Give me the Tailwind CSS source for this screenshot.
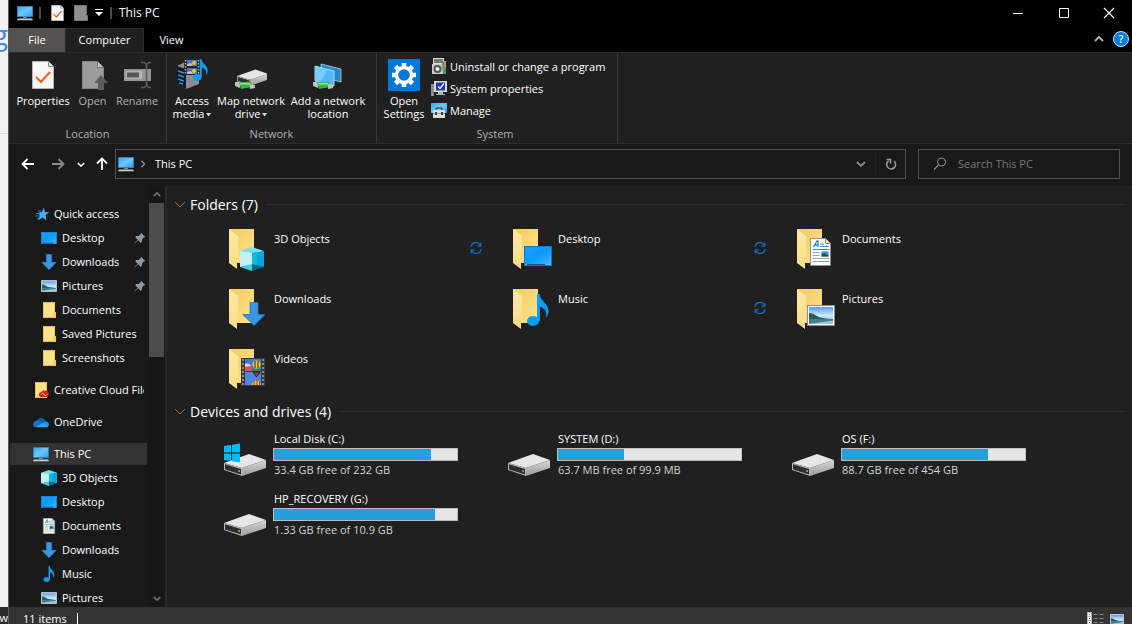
<!DOCTYPE html>
<html lang="en">

<head>
    <meta charset="UTF-8">
    <meta name="viewport" content="width=device-width, initial-scale=1.0">
    <title>This PC</title>
    <script src="https://cdn.jsdelivr.net/npm/@tailwindcss/browser@4"></script>
</head>

<body class="flex h-screen overflow-hidden bg-black font-['Open_Sans','Noto_Sans',sans-serif] text-[11px] text-white">

    <!-- Icon sprite -->
    <svg class="absolute h-0 w-0" aria-hidden="true">
        <defs>
            <linearGradient id="screen" x1="0" y1="0" x2="1" y2="1">
                <stop offset="0" stop-color="#35a9f5" /><stop offset=".5" stop-color="#6cc7ff" /><stop offset="1" stop-color="#2f9df0" />
            </linearGradient>
            <linearGradient id="desk" x1="0" y1="0" x2="1" y2="1">
                <stop offset="0" stop-color="#1f9ffb" /><stop offset=".5" stop-color="#0a9aff" /><stop offset="1" stop-color="#45b4ff" />
            </linearGradient>
            <linearGradient id="back" x1="0" y1="0" x2="1" y2="1">
                <stop offset="0" stop-color="#f3cd62" /><stop offset="1" stop-color="#ffe28d" />
            </linearGradient>
            <linearGradient id="flap" x1="0" y1="0" x2="0" y2="1">
                <stop offset="0" stop-color="#ffe9a6" /><stop offset="1" stop-color="#fbdc86" />
            </linearGradient>
            <linearGradient id="side" x1="0" y1="0" x2="0" y2="1">
                <stop offset="0" stop-color="#d5d5d5" /><stop offset="1" stop-color="#9c9c9c" />
            </linearGradient>
            <linearGradient id="sky" x1="0" y1="0" x2="0" y2="1">
                <stop offset="0" stop-color="#5b9cf0" /><stop offset=".5" stop-color="#cfe6fa" /><stop offset="1" stop-color="#7fb4dc" />
            </linearGradient>
        </defs>

        <symbol id="pc" viewBox="0 0 16 16">
            <path d="M0 1h16v11H0z" fill="#2a6f9e" />
            <path d="M.7 1.7h14.6v9.6H.7z" fill="url(#screen)" />
            <path d="M6 12h4v1H6z" fill="#7e8a94" />
            <path d="M1 13.5h14l1 1.800H0z" fill="#c4d2de" />
        </symbol>
        <symbol id="star" viewBox="0 0 16 16">
            <path d="M10 1.500l.8 4.500 4.500.3-3.800 2.600.9 5.300-3.900-2.700-4.500 3 1.700-5-1.500-2.900 3.400-.3z" fill="#3db2f7" />
            <path d="M4 5h3M2 7.500h4M1 10h4M3 13l3-2" stroke="#1d7fc2" />
        </symbol>
        <symbol id="desktop" viewBox="0 0 28 20" preserveAspectRatio="none">
            <path d="M0 0h28v20H0z" fill="#0876c9" />
            <path d="M1 1h26v17H1z" fill="url(#desk)" />
            <path d="M1 18h26v1H1z" fill="#05579a" />
            <path d="M1.500 18h1v1h-1zM21.500 18h1v1h-1zM23.500 18h1v1h-1zM25.500 18h1v1h-1z" fill="#fff" />
        </symbol>
        <symbol id="arrow" viewBox="0 0 24 24">
            <path d="M8 .5h8v12h7L12 23.500.8 12.500H8z" fill="#3b97e6" stroke="#1f78c4" stroke-width=".8" />
        </symbol>
        <symbol id="picture" viewBox="0 0 28 21" preserveAspectRatio="none">
            <path d="M0 0h28v21H0z" fill="#8c8c8c" />
            <path d="M1 1h26v19H1z" fill="#fff" />
            <path d="M2 2h24v17H2z" fill="url(#sky)" />
            <path d="M2 8c3 0 5 1 8 3s8 2 13 3l3 1H2z" fill="#2d5a55" />
            <path d="M2 14h24v1.500L2 19z" fill="#3f7f8c" />
            <path d="M2 19l24-3v3z" fill="#9cc6d8" />
        </symbol>
        <symbol id="folder" viewBox="0 0 16 16">
            <path d="M2 0h12v16H2z" fill="#e9c04f" />
            <path d="M3 1h10v14H3z" fill="#ffe18a" />
            <path d="M12.500 10H15v6h-2.500z" fill="#f0c95a" />
        </symbol>
        <symbol id="creative" viewBox="0 0 16 16">
            <path d="M2 0h12v16H2z" fill="#e9c04f" />
            <path d="M3 1h10v14H3z" fill="#ffe18a" />
            <path d="M11 8.500c3 0 4.800 1.200 4.800 3.400 0 2-1.300 3.100-3.300 3.100H8.800C7 15 6 14 6 12.400c0-1.700 1.200-2.500 2.600-2.500.5-.9 1.300-1.400 2.400-1.400z" fill="#e21b14" />
            <path d="M8 12.500c1-2 2.200-1.200 3 0s2 1.800 3.200-.2M9.500 11l3 3" stroke="#ffd9a0" stroke-width=".8" fill="none" />
        </symbol>
        <symbol id="onedrive" viewBox="0 0 16 16">
            <path d="M4 6.500a4.500 4.500 0 0 1 8.500 1L9 10 4 8z" fill="#0a5cad" />
            <path d="M.2 10.500C0 8.500 1.500 7 3.500 6.500c2.500-.2 4 1.700 6 2.700L2 13.200C1 12.800.3 11.800.2 10.500z" fill="#1277d4" />
            <path d="M10 9c1-1.200 2-1.600 3-1.500 1.700.2 3 1.500 3 3.200l-1 1.500z" fill="#1990e8" />
            <path d="M2 13.200L10 8.800l5.600 3.200c-.5 1-1.300 1.300-2.400 1.300H3z" fill="#2aa9ef" />
        </symbol>
        <symbol id="cube" viewBox="0 0 24 24">
            <path d="M12 0l12 4-12 4L0 4z" fill="#74dff0" />
            <path d="M0 4l12 2v12L0 20z" fill="#c3f1f4" />
            <path d="M24 4L12 6v12l12 2z" fill="#0aa5de" />
            <path d="M12 6l5-1v14l-5-1z" fill="#10bcd0" />
            <path d="M0 20l12-3v7z" fill="#3dd0de" />
            <path d="M24 20l-12-3v7z" fill="#096d86" />
        </symbol>
        <symbol id="document" viewBox="0 0 21 28">
            <path d="M.5.500h15l5 5v22H.5z" fill="#fff" stroke="#8f8f8f" />
            <path d="M15.500.500v5h5" fill="#e3e3e3" stroke="#8f8f8f" />
            <path d="M3.500 9L7 3h1v6M4.500 7H8" stroke="#2187d0" stroke-width="1.300" fill="none" />
            <path d="M10 6h4M10 8.500h9M2.500 11.500h17" stroke="#2f8fd4" />
            <path d="M2.500 14.500h7M2.500 17.500h7M2.500 20.500h17M2.500 23.500h17" stroke="#a0a0a0" />
            <path d="M11.500 13.500h7v5h-7z" fill="#4a86b8" />
            <path d="M11.500 16.500l3-1 4 2v1h-7z" fill="#214e52" />
        </symbol>
        <symbol id="music" viewBox="0 0 22 32">
            <ellipse cx="6" cy="27" rx="6" ry="5" fill="#0a9cf5" />
            <path d="M10 0h2.500c.5 7 9 9 9 17 0 3-1 5.500-2.500 6.500 1-4.500.5-8-6-11V27H10z" fill="#0a9cf5" />
        </symbol>
        <symbol id="video" viewBox="0 0 24 28">
            <path d="M0 0h24v28H0z" fill="#3a3a3a" />
            <path d="M2 1v27M22 1v27" stroke="#a5a5a5" stroke-width="1.500" stroke-dasharray="2 2" />
            <path d="M4 1h16v12H4z" fill="#4178d6" />
            <path d="M4 14h16v13H4z" fill="#4c86e8" />
            <path d="M4 8c3-3 5 1 7 2v3H4z" fill="#dd4f5b" />
            <path d="M4 6c3-1 5 0 6 2l-6 1z" fill="#f3c6d0" />
            <path d="M11 11h9v2h-9z" fill="#218a45" />
            <circle cx="15.500" cy="6.500" r="4" fill="#f4c81f" />
            <path d="M14 3v7M17 3v7M12 14l3.500 5 3.500-5z" stroke="#222" fill="#c3282b" />
            <path d="M11 27c0-6 9-6 9 0z" fill="#f4c81f" />
            <path d="M13 27v-4M16 27v-5M18.500 27v-3" stroke="#b3322b" />
        </symbol>
        <symbol id="pin" viewBox="0 0 12 12">
            <path d="M7 .8L11.200 5l-1.400.4-1.700 1.800-.2 2.600-1.200 1L4 8.200.8 11.500l-.4-.4L3.700 7.800 1.200 5.300l1-1.200 2.600-.2L6.600 2.200z" fill="#8f9aa3" />
        </symbol>
        <symbol id="bigfolder" viewBox="0 0 40 44">
            <path d="M1 0h25v34H9z" fill="url(#back)" />
            <path d="M1 0l9 7v25H9v8l-8-6z" fill="url(#flap)" />
        </symbol>
        <symbol id="drive" viewBox="0 0 42 22">
            <path d="M0 9L25 0l17 6-24 8z" fill="#e6e6e8" />
            <path d="M18 14l24-8v8l-24 8z" fill="url(#side)" />
            <path d="M0 9l18 5v8L0 16z" fill="#b9b9b9" />
            <path d="M1 10.300l16 4.600v5.700L1 15.500z" fill="#2e2e2e" />
            <path d="M14 16l2 .6v1.600l-2-.6z" fill="#37e03a" />
        </symbol>
        <symbol id="sync" viewBox="0 0 12 12">
            <path d="M1 4.800A4.800 4.800 0 0 1 10 3M11 7.200A4.800 4.800 0 0 1 2 9" stroke="#0f76d4" stroke-width="1.200" fill="none" />
            <path d="M10.800.8v3.400H7.400M1.200 11.200V7.800h3.400" stroke="#0f76d4" stroke-width="1.200" fill="none" />
        </symbol>
        <symbol id="check" viewBox="0 0 22 28">
            <path d="M.5.500h16l5 5v22H.5z" fill="#f6f6f6" stroke="#b5b5b5" />
            <path d="M16.500.500v5h5" fill="#ddd" stroke="#888" />
            <path d="M4 16l5 5 9-10" stroke="#f26522" stroke-width="2.200" fill="none" />
        </symbol>
        <symbol id="chev" viewBox="0 0 10 6">
            <path d="M1 1l4 4 4-4" fill="none" stroke="currentColor" stroke-width="1.800" />
        </symbol>
        <symbol id="thinchev" viewBox="0 0 12 7">
            <path d="M1 1l5 5 5-5" fill="none" stroke="currentColor" />
        </symbol>
        <symbol id="plug" viewBox="0 0 20 8">
            <path d="M0 1l5 0v6l-5-2z" fill="#b9c6b9" />
            <path d="M4 1h12l1 5-11 2z" fill="#35b54a" />
            <path d="M5 2h10v1.500H5z" fill="#8fe69b" />
            <path d="M15 3l5 1v3l-5 1z" fill="#b9c6b9" />
        </symbol>
    </svg>

    <!-- Window behind -->
    <div class="flex w-2 shrink-0 flex-col overflow-hidden bg-[#f1f1f1]" aria-hidden="true">
        <div class="flex h-[134px] justify-end border-b border-[#d8d8d8] pt-3 font-['Open_Sans',sans-serif] text-[28px] leading-[44px] text-[#4285f4]">g</div>
        <div class="flex-1"></div>
        <div class="flex h-[17px] justify-end bg-[#2b2b2b] text-[11px] leading-[22px]">ww</div>
    </div>

    <!-- Explorer window -->
    <div class="flex min-w-0 flex-1 flex-col border-l border-[#5a5a5a]">

        <header class="flex h-7 shrink-0 items-center bg-black pb-0.5 pl-2">
            <svg class="h-4 w-4"><use href="#pc" /></svg>
            <span class="ml-1.5 h-3 w-0.5 bg-[#4a4a4a]"></span>
            <button class="ml-2 flex w-4 justify-center" aria-label="Properties"><svg class="h-4 w-[13px]"><use href="#check" /></svg></button>
            <button class="ml-2 flex w-4 justify-center" aria-label="New folder">
                <svg class="h-4 w-[14px]" viewBox="0 0 14 16"><path d="M.5.500h12v10h1v5H.5z" fill="#8f8f8f" stroke="#777" /></svg>
            </button>
            <button class="ml-0.5 flex w-4 justify-center" aria-label="Customize">
                <svg class="h-2 w-2" viewBox="0 0 8 8"><path d="M0 0h8v1H0zM0 3h8L4 7z" fill="#fff" /></svg>
            </button>
            <span class="ml-[3px] h-3 w-0.5 bg-[#4a4a4a]"></span>
            <h1 class="ml-[7px] flex-1 text-[12px]">This PC</h1>
            <button class="flex w-[46px] justify-center" aria-label="Minimize"><svg class="h-3 w-3" viewBox="0 0 12 12"><path d="M1 6.500h10" stroke="#fff" /></svg></button>
            <button class="flex w-[45px] justify-center" aria-label="Maximize"><svg class="h-3 w-3" viewBox="0 0 12 12"><path d="M1.500 1.500h9v9h-9z" fill="none" stroke="#fff" /></svg></button>
            <button class="flex w-[46px] justify-center" aria-label="Close"><svg class="h-3 w-3" viewBox="0 0 12 12"><path d="M1 1l10 10M11 1L1 11" stroke="#fff" stroke-width="1.200" /></svg></button>
        </header>

        <nav class="flex h-6 shrink-0 items-stretch bg-black" aria-label="Ribbon tabs">
            <button class="w-14 bg-[#545250]">File</button>
            <button class="-mb-px w-[79px] border-x border-t border-[#2b2b2b] bg-[#202020] pb-0.5">Computer</button>
            <button class="w-[55px]">View</button>
            <div class="flex flex-1 items-center justify-end gap-[9px] pb-0.5 pr-[3px]">
                <button class="text-[#b5b5b5]" aria-label="Collapse ribbon"><svg class="h-1.5 w-2.5 rotate-180"><use href="#chev" /></svg></button>
                <button class="flex h-4 w-4 items-center justify-center rounded-full border border-[#c9e3f8] bg-[#0a7be0] text-[10px] font-semibold" aria-label="Help">?</button>
            </div>
        </nav>

        <!-- Ribbon -->
        <div class="flex h-[92px] shrink-0 border-y border-[#2b2b2b] bg-[#202020] leading-[13px]">
            <section class="flex w-[158px] flex-col border-r border-[#383838]">
                <div class="flex flex-1 items-start pl-[7px] pt-1.5">
                    <button class="flex w-[54px] flex-col items-center gap-[3px]">
                        <svg class="h-8 w-8" viewBox="0 0 32 32"><use href="#check" x="5" y="2" width="22" height="28" /></svg>
                        Properties
                    </button>
                    <button class="flex w-[45px] flex-col items-center gap-[3px] text-[#b0b0b0]">
                        <svg class="h-8 w-8" viewBox="0 0 32 32">
                            <path d="M5.500 2.500h15l6 6v21h-21z" fill="#9b9b9b" stroke="#858585" />
                            <path d="M20.500 2.500v6h6" fill="#c4c4c4" stroke="#777" />
                            <path d="M24 16l7 8h-4v7h-6v-7h-4z" fill="#5d5d5d" />
                        </svg>
                        Open
                    </button>
                    <button class="flex w-[44px] flex-col items-center gap-[3px] text-[#b0b0b0]">
                        <svg class="h-8 w-8" viewBox="0 0 32 32">
                            <path d="M3 10h27v12H3z" fill="#979797" />
                            <path d="M5 12h16v8H5z" fill="#b5b5b5" />
                            <path d="M6 13.500h12v5H6z" fill="#565656" />
                            <path d="M20 3.500h3l2.500 2v21l-2.500 2h-3M30 3.500h-2l-2.500 2M30 28.500h-2l-2.500-2" stroke="#5d5d5d" stroke-width="1.600" fill="none" />
                        </svg>
                        Rename
                    </button>
                </div>
                <h2 class="pb-[3px] text-center text-[#b0b0b0]">Location</h2>
            </section>

            <section class="flex w-[210px] flex-col border-r border-[#383838]">
                <div class="flex flex-1 items-start pl-px pt-1.5">
                    <button class="flex w-[48px] flex-col items-center gap-[3px]">
                        <svg class="h-8 w-8" viewBox="0 0 32 32">
                            <path d="M1 7l8-4 14 5v17l-13 5-9-4z" fill="#8b8e92" />
                            <path d="M1 7l9 3v20l-9-4z" fill="#15181c" />
                            <path d="M2 12l6 2M2 16l6 2M2 20l6 2M3 24l4 1" stroke="#1d9bf0" stroke-width="1.400" />
                            <path d="M8 0h16v16H8z" fill="#222" />
                            <path d="M9.500 1v15M22.500 1v15" stroke="#b5b5b5" stroke-width="1.500" stroke-dasharray="1.500 1.500" />
                            <path d="M11 1h10v6H11zM11 9h10v6H11z" fill="#4178d6" />
                            <path d="M11 5l4-1 2 3h-6zM11 13l4-1 2 3h-6z" fill="#e8b0b8" />
                            <circle cx="18" cy="4" r="2" fill="#f4c81f" /><circle cx="18" cy="12" r="2" fill="#f4c81f" />
                            <use href="#music" x="17" y="0" width="15" height="22" />
                        </svg>
                        <span>Access<br>media<svg class="ml-0.5 inline h-1 w-[5px]" viewBox="0 0 5 4"><path d="M0 0h5L2.500 3.500z" fill="#ddd" /></svg></span>
                    </button>
                    <button class="flex w-[70px] flex-col items-center gap-[3px] whitespace-nowrap">
                        <svg class="h-8 w-8" viewBox="0 0 32 32">
                            <use href="#drive" x="2" y="10" width="31" height="17" />
                            <use href="#plug" x="0" y="22" width="20" height="8" />
                        </svg>
                        <span>Map network<br>drive<svg class="ml-0.5 inline h-1 w-[5px]" viewBox="0 0 5 4"><path d="M0 0h5L2.500 3.500z" fill="#ddd" /></svg></span>
                    </button>
                    <button class="flex w-[84px] flex-col items-center gap-[3px] whitespace-nowrap">
                        <svg class="h-8 w-8" viewBox="0 0 32 32">
                            <path d="M9 5l20 5v13L9 18z" fill="#2b87c4" stroke="#9ed7f7" stroke-width=".8" />
                            <path d="M3 7l19 5v15L3 22z" fill="#55b6f5" stroke="#b9e3fa" stroke-width=".9" />
                            <path d="M3 7l13 3.500L8 23l-5-1z" fill="#7acbfb" />
                            <use href="#plug" x="1" y="22" width="20" height="8" />
                        </svg>
                        <span>Add a network<br>location</span>
                    </button>
                </div>
                <h2 class="pb-[3px] text-center text-[#b0b0b0]">Network</h2>
            </section>

            <section class="flex w-[241px] flex-col border-r border-[#383838]">
                <div class="flex flex-1 items-start pl-[3px]">
                    <button class="mt-1.5 flex w-[48px] flex-col items-center gap-[3px]">
                        <svg class="h-8 w-8" viewBox="0 0 32 32">
                            <path d="M0 0h32v32H0z" fill="#0078d7" />
                            <g stroke="#fff" stroke-width="4.600">
                                <path d="M16 4v24M4 16h24M7.500 7.500l17 17M24.500 7.500l-17 17" />
                            </g>
                            <circle cx="16" cy="16" r="7.500" fill="#0078d7" stroke="#fff" stroke-width="3.400" />
                        </svg>
                        <span>Open<br>Settings</span>
                    </button>
                    <div class="ml-[3px] flex flex-col pt-[3px]">
                        <button class="flex h-[22px] items-center gap-[3px] pb-0.5">
                            <svg class="h-4 w-4" viewBox="0 0 16 16">
                                <path d="M2 0h11v7H2z" fill="#d8d8d8" /><path d="M3 1h9v4H3z" fill="#777" />
                                <path d="M1 6h11v10H1z" fill="#c9c9c9" /><path d="M11 4l4-1v13h-3z" fill="#4c9a5c" /><path d="M13 3h2v6h-2z" fill="#e08a4a" />
                                <circle cx="6.500" cy="11" r="4" fill="#555" /><circle cx="6.500" cy="11" r="2" fill="#eee" />
                            </svg>
                            Uninstall or change a program
                        </button>
                        <button class="flex h-[22px] items-center gap-[3px] pb-0.5">
                            <svg class="h-4 w-4" viewBox="0 0 16 16">
                                <path d="M0 4h3v12H0z" fill="#8d8d8d" /><path d="M3 1h13v11H3z" fill="#d9d9d9" /><path d="M5 2.500h9v8H5z" fill="#1c39b8" />
                                <path d="M7 6.500l2 2 4-5" stroke="#fff" stroke-width="1.300" fill="none" /><path d="M7 12h5v2h2v1H5v-1h2z" fill="#b5b5b5" />
                            </svg>
                            System properties
                        </button>
                        <button class="flex h-[22px] items-center gap-[3px] pb-0.5">
                            <svg class="h-4 w-4" viewBox="0 0 16 16">
                                <path d="M0 1h16v10H0z" fill="url(#screen)" /><path d="M5 8V6h6v2" fill="none" stroke="#333" />
                                <path d="M2 8h12v8H2z" fill="#dcdcdc" /><path d="M2 11h12v1H2z" fill="#999" /><path d="M4 10h2v3H4zM10 10h2v3h-2z" fill="#444" />
                            </svg>
                            Manage
                        </button>
                    </div>
                </div>
                <h2 class="pb-[3px] pr-1 text-center text-[#b0b0b0]">System</h2>
            </section>
        </div>

        <!-- Address bar -->
        <div class="flex h-[42px] shrink-0 items-center bg-[#191919] pb-0.5 pl-3 pr-3">
            <button aria-label="Back"><svg class="h-3.5 w-3.5" viewBox="0 0 14 14"><path d="M13 7H2M6.500 2L1.500 7l5 5" fill="none" stroke="#fff" stroke-width="1.800" /></svg></button>
            <button class="ml-4" aria-label="Forward"><svg class="h-3.5 w-3.5" viewBox="0 0 14 14"><path d="M1 7h11M7.500 2l5 5-5 5" fill="none" stroke="#8a8a8a" stroke-width="1.800" /></svg></button>
            <button class="ml-3" aria-label="Recent locations"><svg class="h-[5px] w-2"><use href="#chev" /></svg></button>
            <button class="ml-2.5" aria-label="Up"><svg class="h-3.5 w-3.5" viewBox="0 0 14 14"><path d="M7 13V2M2 6.500l5-5 5 5" fill="none" stroke="#fff" stroke-width="1.800" /></svg></button>
            <div class="ml-[6px] flex h-[30px] flex-1 items-center border border-[#535353] pl-0.5">
                <svg class="h-4 w-4"><use href="#pc" /></svg>
                <svg class="ml-[5px] h-1.5 w-2 -rotate-90 text-[#8a8a8a]"><use href="#chev" /></svg>
                <span class="ml-2 flex-1">This PC</span>
                <button class="mr-[9px] text-[#8a8a8a]" aria-label="Previous locations"><svg class="h-1.5 w-2.5"><use href="#chev" /></svg></button>
                <button class="flex h-full w-[30px] items-center justify-center border-l border-[#222]" aria-label="Refresh">
                    <svg class="h-3 w-3" viewBox="0 0 12 12"><path d="M3.500 2.800A4.500 4.500 0 1 0 9 3" fill="none" stroke="#9a9a9a" stroke-width="1.500" /><path d="M1.500 1.500h4v4" fill="none" stroke="#9a9a9a" stroke-width="1.500" /></svg>
                </button>
            </div>
            <label class="ml-3 flex h-[30px] w-[202px] items-center border border-[#535353] pl-[14px]">
                <svg class="h-3.5 w-3.5 shrink-0" viewBox="0 0 14 14"><circle cx="8.500" cy="5" r="4" fill="none" stroke="#8a8a8a" /><path d="M5.500 8L1 12.500" stroke="#8a8a8a" stroke-width="1.200" /></svg>
                <input type="search" aria-label="Search" placeholder="Search This PC" class="ml-[11px] w-full min-w-0 bg-transparent outline-none placeholder:text-[#7a7a7a]">
            </label>
        </div>

        <div class="flex min-h-0 flex-1">
            <!-- Navigation pane -->
            <aside class="flex w-[158px] shrink-0 border-r-2 border-[#2b2b2b] bg-[#191919]">
                <nav class="flex w-[139px] flex-col gap-0.5 overflow-hidden whitespace-nowrap pl-px pt-[17px]" aria-label="Folders">
                    <a href="#" class="flex h-[22px] shrink-0 items-center gap-1 pl-6"><svg class="h-4 w-4"><use href="#star" /></svg>Quick access</a>
                    <a href="#" class="flex h-[22px] shrink-0 items-center gap-[5px] pl-[31px]"><svg class="h-3 w-4"><use href="#desktop" /></svg>Desktop<svg class="ml-auto mr-0.5 h-3 w-3"><use href="#pin" /></svg></a>
                    <a href="#" class="flex h-[22px] shrink-0 items-center gap-[5px] pl-[31px]"><svg class="h-4 w-4"><use href="#arrow" /></svg>Downloads<svg class="ml-auto mr-0.5 h-3 w-3"><use href="#pin" /></svg></a>
                    <a href="#" class="flex h-[22px] shrink-0 items-center gap-[5px] pl-[31px]"><svg class="h-3 w-4"><use href="#picture" /></svg>Pictures<svg class="ml-auto mr-0.5 h-3 w-3"><use href="#pin" /></svg></a>
                    <a href="#" class="flex h-[22px] shrink-0 items-center gap-[5px] pl-[31px]"><svg class="h-4 w-4"><use href="#folder" /></svg>Documents</a>
                    <a href="#" class="flex h-[22px] shrink-0 items-center gap-[5px] pl-[31px]"><svg class="h-4 w-4"><use href="#folder" /></svg>Saved Pictures</a>
                    <a href="#" class="flex h-[22px] shrink-0 items-center gap-[5px] pl-[31px]"><svg class="h-4 w-4"><use href="#folder" /></svg>Screenshots</a>
                    <a href="#" class="mt-2 mr-1 flex h-[22px] shrink-0 items-center gap-[5px] overflow-hidden pl-[23px]"><svg class="h-4 w-4 shrink-0"><use href="#creative" /></svg>Creative Cloud Files</a>
                    <a href="#" class="mt-2 flex h-[22px] shrink-0 items-center gap-[5px] pl-[23px]"><svg class="h-4 w-4"><use href="#onedrive" /></svg>OneDrive</a>
                    <a href="#" class="mt-2 mr-px flex h-[22px] shrink-0 items-center gap-[5px] bg-[#333] pl-[23px]"><svg class="h-4 w-4"><use href="#pc" /></svg>This PC</a>
                    <a href="#" class="flex h-[22px] shrink-0 items-center gap-[5px] pl-[31px]"><svg class="h-4 w-4"><use href="#cube" /></svg>3D Objects</a>
                    <a href="#" class="flex h-[22px] shrink-0 items-center gap-[5px] pl-[31px]"><svg class="h-3 w-4"><use href="#desktop" /></svg>Desktop</a>
                    <a href="#" class="flex h-[22px] shrink-0 items-center gap-[5px] pl-[31px]"><svg class="h-4 w-4"><use href="#document" /></svg>Documents</a>
                    <a href="#" class="flex h-[22px] shrink-0 items-center gap-[5px] pl-[31px]"><svg class="h-4 w-4"><use href="#arrow" /></svg>Downloads</a>
                    <a href="#" class="flex h-[22px] shrink-0 items-center gap-[5px] pl-[31px]"><svg class="h-4 w-4"><use href="#music" /></svg>Music</a>
                    <a href="#" class="flex h-[22px] shrink-0 items-center gap-[5px] pl-[31px]"><svg class="h-3 w-4"><use href="#picture" /></svg>Pictures</a>
                </nav>
                <div class="flex w-[17px] flex-col items-center bg-[#171717] text-[#7a7a7a]">
                    <svg class="my-[6px] h-[5px] w-2 shrink-0 rotate-180"><use href="#chev" /></svg>
                    <div class="h-[154px] w-[15px] bg-[#4d4d4d]"></div>
                    <svg class="mb-[6px] mt-auto h-[5px] w-2 shrink-0"><use href="#chev" /></svg>
                </div>
            </aside>

            <!-- Content -->
            <main class="min-w-0 flex-1 overflow-hidden bg-[#202020] pt-1.5">
                <section>
                    <h2 class="flex h-6 items-center pl-[7px] pr-[7px] text-[14px]">
                        <svg class="mr-1 h-[7px] w-3 text-[#7a7a7a]"><use href="#thinchev" /></svg>Folders (7)
                        <span class="ml-2 h-px flex-1 bg-[#2f2f2f]"></span>
                    </h2>
                    <div class="grid grid-cols-[repeat(auto-fill,284px)] pl-14 pt-px">
                        <a href="#" class="flex h-[60px] items-start pt-3">
                            <svg class="ml-[5px] h-11 w-[46px]" viewBox="0 0 46 44"><use href="#bigfolder" width="40" height="44" /><use href="#cube" x="12" y="18" width="24" height="24" /></svg>
                            <span class="flex-1 leading-5">3D Objects</span>
                            <svg class="mr-[25px] mt-[13px] h-3 w-3"><use href="#sync" /></svg>
                        </a>
                        <a href="#" class="flex h-[60px] items-start pt-3">
                            <svg class="ml-[5px] h-11 w-[46px]" viewBox="0 0 46 44"><use href="#bigfolder" width="40" height="44" /><use href="#desktop" x="12" y="17" width="28" height="20" /></svg>
                            <span class="flex-1 leading-5">Desktop</span>
                            <svg class="mr-[25px] mt-[13px] h-3 w-3"><use href="#sync" /></svg>
                        </a>
                        <a href="#" class="flex h-[60px] items-start pt-3">
                            <svg class="ml-[5px] h-11 w-[46px]" viewBox="0 0 46 44"><use href="#bigfolder" width="40" height="44" /><use href="#document" x="14" y="9" width="21" height="28" /></svg>
                            <span class="flex-1 leading-5">Documents</span>
                        </a>
                        <a href="#" class="flex h-[60px] items-start pt-3">
                            <svg class="ml-[5px] h-11 w-[46px]" viewBox="0 0 46 44"><use href="#bigfolder" width="40" height="44" /><use href="#arrow" x="14" y="13" width="24" height="24" /></svg>
                            <span class="flex-1 leading-5">Downloads</span>
                        </a>
                        <a href="#" class="flex h-[60px] items-start pt-3">
                            <svg class="ml-[5px] h-11 w-[46px]" viewBox="0 0 46 44"><use href="#bigfolder" width="40" height="44" /><use href="#music" x="15" y="5" width="22" height="32" /></svg>
                            <span class="flex-1 leading-5">Music</span>
                            <svg class="mr-[25px] mt-[13px] h-3 w-3"><use href="#sync" /></svg>
                        </a>
                        <a href="#" class="flex h-[60px] items-start pt-3">
                            <svg class="ml-[5px] h-11 w-[46px]" viewBox="0 0 46 44"><use href="#bigfolder" width="40" height="44" /><use href="#picture" x="11" y="16" width="28" height="21" /></svg>
                            <span class="flex-1 leading-5">Pictures</span>
                        </a>
                        <a href="#" class="flex h-[60px] items-start pt-3">
                            <svg class="ml-[5px] h-11 w-[46px]" viewBox="0 0 46 44"><use href="#bigfolder" width="40" height="44" /><use href="#video" x="13" y="9" width="24" height="28" /></svg>
                            <span class="flex-1 leading-5">Videos</span>
                        </a>
                    </div>
                </section>

                <section class="mt-0.5">
                    <h2 class="flex h-6 items-center pl-[7px] pr-[7px] text-[14px]">
                        <svg class="mr-1 h-[7px] w-3 text-[#7a7a7a]"><use href="#thinchev" /></svg>Devices and drives (4)
                        <span class="ml-2 h-px flex-1 bg-[#2f2f2f]"></span>
                    </h2>
                    <div class="grid grid-cols-[repeat(auto-fill,284px)] pl-14">
                        <a href="#" class="flex h-[60px] items-start gap-[7px] pl-px pt-2">
                            <svg class="h-[46px] w-[42px]" viewBox="0 0 42 46">
                                <use href="#drive" y="23" width="42" height="22" />
                                <path d="M0 15l7-1v7.500H0zM8 13.800l8-1.300v9H8zM0 22.500h7V30l-7-1zM8 22.500h8v9l-8-1.300z" fill="#00bcf2" />
                            </svg>
                            <div class="w-[185px] leading-4">
                                <p class="pl-px">Local Disk (C:)</p>
                                <div class="my-px h-[13px] border border-[#bcbcbc] bg-[#e6e6e6]"><div class="h-full bg-[#26a0da]" style="width: 86%"></div></div>
                                <p class="pl-px text-[#d4d4d4]">33.4 GB free of 232 GB</p>
                            </div>
                        </a>
                        <a href="#" class="flex h-[60px] items-start gap-[7px] pl-px pt-2">
                            <svg class="h-[46px] w-[42px]" viewBox="0 0 42 46"><use href="#drive" y="23" width="42" height="22" /></svg>
                            <div class="w-[185px] leading-4">
                                <p class="pl-px">SYSTEM (D:)</p>
                                <div class="my-px h-[13px] border border-[#bcbcbc] bg-[#e6e6e6]"><div class="h-full bg-[#26a0da]" style="width: 36%"></div></div>
                                <p class="pl-px text-[#d4d4d4]">63.7 MB free of 99.9 MB</p>
                            </div>
                        </a>
                        <a href="#" class="flex h-[60px] items-start gap-[7px] pl-px pt-2">
                            <svg class="h-[46px] w-[42px]" viewBox="0 0 42 46"><use href="#drive" y="23" width="42" height="22" /></svg>
                            <div class="w-[185px] leading-4">
                                <p class="pl-px">OS (F:)</p>
                                <div class="my-px h-[13px] border border-[#bcbcbc] bg-[#e6e6e6]"><div class="h-full bg-[#26a0da]" style="width: 80%"></div></div>
                                <p class="pl-px text-[#d4d4d4]">88.7 GB free of 454 GB</p>
                            </div>
                        </a>
                        <a href="#" class="flex h-[60px] items-start gap-[7px] pl-px pt-2">
                            <svg class="h-[46px] w-[42px]" viewBox="0 0 42 46"><use href="#drive" y="23" width="42" height="22" /></svg>
                            <div class="w-[185px] leading-4">
                                <p class="pl-px">HP_RECOVERY (G:)</p>
                                <div class="my-px h-[13px] border border-[#bcbcbc] bg-[#e6e6e6]"><div class="h-full bg-[#26a0da]" style="width: 88%"></div></div>
                                <p class="pl-px text-[#d4d4d4]">1.33 GB free of 10.9 GB</p>
                            </div>
                        </a>
                    </div>
                </section>
            </main>
        </div>

        <!-- Status bar -->
        <footer class="h-[17px] shrink-0 overflow-hidden bg-[#333]">
            <div class="flex h-6 items-center pl-[14px] pr-2">
                <span>11 items</span>
                <span class="ml-2.5 h-3 w-px bg-white"></span>
                <button class="ml-auto" aria-label="Details view">
                    <svg class="h-3.5 w-[18px]" viewBox="0 0 18 14">
                        <path d="M0 0h5v14H0z" fill="#b5b5b5" />
                        <path d="M1 1h3v3H1zM1 5h3v3H1zM1 9h3v3H1z" fill="#fff" />
                        <path d="M2 2h1v1H2zM2 6h1v1H2z" fill="#36a" /><path d="M2 10h1v1H2z" fill="#c22" />
                        <path d="M6.500 2.500h4M12.500 2.500h4M6.500 6.500h4M12.500 6.500h4M6.500 10.500h4M12.500 10.500h4" stroke="#8a8a8a" />
                    </svg>
                </button>
                <button class="ml-[5px]" aria-label="Large icons view"><svg class="h-[11px] w-[14px]"><use href="#picture" /></svg></button>
            </div>
        </footer>
    </div>
</body>

</html>
